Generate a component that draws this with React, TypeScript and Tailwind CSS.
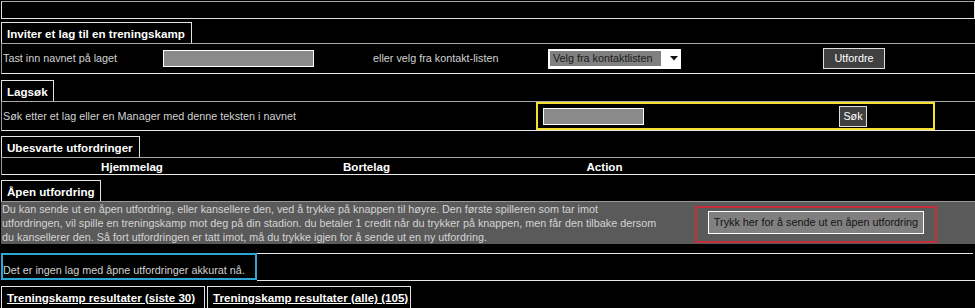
export default function App() {
  const tab =
    "h-[21px] border-l border-t border-r border-[#e4e4e4] pl-[5px] text-[11.6px] font-bold leading-[21px] text-white whitespace-nowrap";
  return (
    <div className="w-[975px] h-[308px] overflow-hidden bg-black font-['Liberation_Sans',Arial,sans-serif] text-[10.8px] text-[#d2d2d2] pt-px pl-px">
      {/* top box */}
      <div className="h-[18px] w-[974px] border border-[#e0e0e0] border-t-[#a8a8a8]" />

      {/* Inviter */}
      <div className={`${tab} mt-[3px] w-[191px]`}>Inviter et lag til en treningskamp</div>
      <div className="flex h-[31px] items-center border-t border-b border-l border-t-[#a8a8a8] border-b-[#e8e8e8] border-l-[#9a9a9a]">
        <div className="w-[161px] pl-px">Tast inn navnet på laget</div>
        <div className="w-[210px]">
          <div className="h-[17px] w-[151px] border border-white bg-[#8a8a8a]" />
        </div>
        <div className="w-[175px]">eller velg fra kontakt-listen</div>
        <div className="w-[275px]">
          <div className="flex h-[20px] w-[133px] items-center bg-white px-[2px]">
            <div className="h-[15px] w-[111px] bg-[#808080] pl-[3px] leading-[15px] text-[#1a1a1a]">Velg fra kontaktlisten</div>
            <svg width="8" height="5" viewBox="0 0 8 5" className="ml-[9px]">
              <path d="M0 0 H8 L4 4.5 Z" fill="#111" />
            </svg>
          </div>
        </div>
        <div className="flex h-[21px] w-[62px] items-center justify-center border border-[#e0e0e0] bg-[#404040] text-white">Utfordre</div>
      </div>

      {/* Lagsøk */}
      <div className={`${tab} mt-[6px] w-[53px]`}>Lagsøk</div>
      <div className="flex h-[30px] items-center border-t border-b border-l border-t-[#a8a8a8] border-b-[#e8e8e8] border-l-[#9a9a9a]">
        <div className="w-[534px] pl-px">Søk etter et lag eller en Manager med denne teksten i navnet</div>
        <div className="flex h-[28px] w-[399px] items-center border-2 border-[#f2e22e] pl-[5px]">
          <div className="h-[17px] w-[101px] border border-white bg-[#8a8a8a]" />
          <div className="ml-[195px] flex h-[21px] w-[28px] items-center justify-center border border-[#e0e0e0] bg-[#404040] text-white">Søk</div>
        </div>
      </div>

      {/* Ubesvarte */}
      <div className={`${tab} mt-[5px] w-[139px]`}>Ubesvarte utfordringer</div>
      <div className="grid h-[18px] grid-cols-[260px_209px_267px_1fr] items-center border-t border-b border-l border-t-[#a8a8a8] border-b-[#e8e8e8] border-l-[#9a9a9a] text-[11.6px] font-bold text-white">
        <div className="text-center">Hjemmelag</div>
        <div className="text-center">Bortelag</div>
        <div className="text-center">Action</div>
        <div />
      </div>

      {/* Åpen */}
      <div className={`${tab} mt-[5px] w-[100px]`}>Åpen utfordring</div>
      <div className="flex h-[43px] items-start border-t border-t-[#9a9a9a] bg-[#5a5a5a] text-[#d4d4d4]">
        <div className="w-[694px] pl-px leading-[14px]">
          Du kan sende ut en åpen utfordring, eller kansellere den, ved å trykke på knappen til høyre. Den første spilleren som tar imot
          <br />
          utfordringen, vil spille en treningskamp mot deg på din stadion. du betaler 1 credit når du trykker på knappen, men får den tilbake dersom
          <br />
          du kansellerer den. Så fort utfordringen er tatt imot, må du trykke igjen for å sende ut en ny utfordring.
        </div>
        <div className="mt-[4px] flex h-[37px] w-[242px] justify-center border-2 border-[#c42f3a] pt-[3px]">
          <div className="flex h-[23px] w-[216px] items-center justify-center border border-white bg-[#808080] text-[#141414]">
            Trykk her for å sende ut en åpen utfordring
          </div>
        </div>
      </div>

      {/* blue row */}
      <div className="mt-[9px] flex h-[28px]">
        <div className="h-[27px] w-[256px] border-2 border-[#2fa5d5] pt-[9px] leading-[13px]">Det er ingen lag med åpne utfordringer akkurat nå.</div>
        <div className="flex flex-1 flex-col justify-between border-b border-[#e8e8e8]">
          <div className="mr-[2px] border-t border-[#e8e8e8]" />
        </div>
      </div>

      {/* bottom tabs */}
      <div className="mt-[5px] flex gap-[2px]">
        <div className={`${tab} h-[22px] w-[204px] underline`}>Treningskamp resultater (siste 30)</div>
        <div className={`${tab} h-[22px] w-[204px] underline`}>Treningskamp resultater (alle) (105)</div>
      </div>
    </div>
  );
}
